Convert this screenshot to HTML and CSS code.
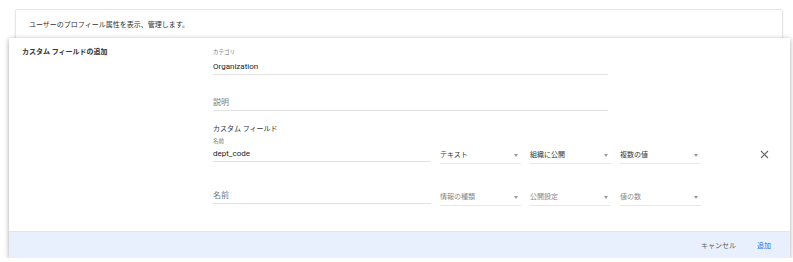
FILE: index.html
```html
<!DOCTYPE html>
<html lang="ja">
<head>
    <meta charset="UTF-8">
    <meta name="viewport" content="width=device-width, initial-scale=1.0">
    <title>カスタム フィールドの追加</title>
    <link rel="stylesheet" href="styles.css">
</head>
<body>
 <div class="intro">ユーザーのプロフィール属性を表示、管理します。</div>

 <div class="dialogo">
    <div class="corpo">
        <h2 class="titulo">カスタム フィールドの追加</h2>

        <div class="campos">
            <div class="rotulo">カテゴリ</div>
            <div class="entrada">Organization</div>

            <div class="entrada vazio espaco">説明</div>

            <div class="subtitulo">カスタム フィールド</div>
            <div class="rotulo nome">名前</div>

            <div class="linha">
                <div class="entrada curta">dept_code</div>
                <div class="selecao">テキスト</div>
                <div class="selecao">組織に公開</div>
                <div class="selecao">複数の値</div>
                <a class="fechar">
                    <svg width="9" height="9" viewBox="0 0 9 9"><path d="M1 1L8 8M8 1L1 8" stroke="#5f6368" stroke-width="1.1" fill="none"/></svg>
                </a>
            </div>

            <div class="linha segunda">
                <div class="entrada curta vazio">名前</div>
                <div class="selecao vazio">情報の種類</div>
                <div class="selecao vazio">公開設定</div>
                <div class="selecao vazio">値の数</div>
            </div>
        </div>
    </div>

    <div class="rodape">
        <a class="botao">キャンセル</a>
        <a class="botao azul">追加</a>
    </div>
 </div>
</body>
</html>
```

FILE: styles.css
```css
* {
    font-family: Roboto, "Noto Sans CJK JP", sans-serif;
    box-sizing: border-box;
}

body {
    margin: 0;
    background-color: #fff;
    color: #333;
}

.intro {
    margin: 9px 10px 0 15px;
    height: 36px;
    padding: 10px 13px 0;
    font-size: 7px;
    line-height: 10px;
    border: 1px solid #e6e6e6;
    border-radius: 2px;
    box-shadow: 0 1px 2px rgba(0, 0, 0, .08);
}

.dialogo {
    position: relative;
    margin: -7px 3px 0 9px;
    background-color: #fff;
    box-shadow: 0 1px 5px rgba(0, 0, 0, .35);
}

.corpo {
    display: grid;
    grid-template-columns: 191px 1fr;
    padding: 9px 21px 25px 13px;
}

.titulo {
    margin: 0;
    font-size: 7px;
    line-height: 10px;
    font-weight: 700;
    color: #333;
}

.rotulo {
    font-size: 5.5px;
    line-height: 10px;
    color: #777;
}
.rotulo.nome {
    margin-top: 3px;
    line-height: 8px;
}

.entrada {
    width: 395px;
    margin-top: 5px;
    font-size: 8px;
    line-height: 10px;
    padding-bottom: 2px;
    border-bottom: 1px solid #e2e2e2;
    color: #222;
}
.entrada.vazio {
    color: #777;
}
.entrada.espaco {
    margin-top: 23px;
}
.entrada.curta {
    width: 218px;
    margin-top: 0;
}

.subtitulo {
    margin-top: 13px;
    font-size: 7px;
    line-height: 10px;
    color: #333;
}

.linha {
    display: flex;
    align-items: flex-start;
    gap: 9px;
    margin-top: 4px;
}
.linha.segunda {
    margin-top: 27px;
}

.selecao {
    position: relative;
    width: 81px;
    font-size: 7px;
    line-height: 12px;
    padding-bottom: 2px;
    border-bottom: 1px solid #e8e8e8;
    color: #333;
}
.selecao.vazio {
    color: #888;
}
.selecao::after {
    content: "";
    position: absolute;
    right: 3px;
    top: 5px;
    border-left: 2.5px solid transparent;
    border-right: 2.5px solid transparent;
    border-top: 3px solid #9a9a9a;
}

.fechar {
    margin-left: auto;
    margin-top: 1px;
    line-height: 0;
}

.rodape {
    display: flex;
    justify-content: flex-end;
    align-items: center;
    gap: 21px;
    height: 27px;
    padding-right: 19px;
    background-color: #e8f0fe;
    border-top: 1px solid #dde5f3;
}

.botao {
    font-size: 7px;
    color: #5f6368;
}
.botao.azul {
    color: #1a73e8;
}
```
